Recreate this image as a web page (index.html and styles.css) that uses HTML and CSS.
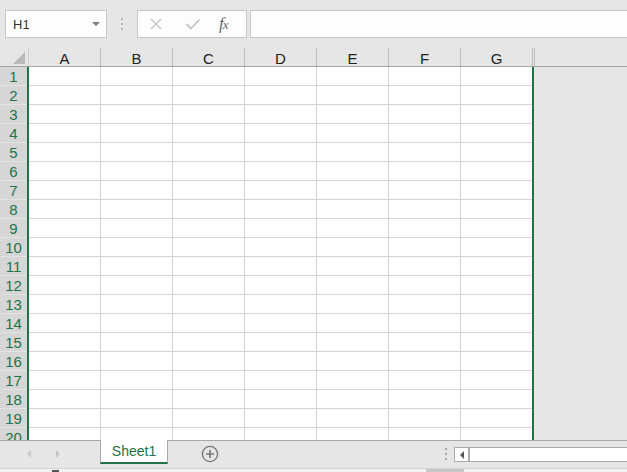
FILE: index.html
```html
<!DOCTYPE html>
<html lang="en">
<head>
<meta charset="UTF-8" />
<title>Book1 - Sheet1</title>
<link rel="stylesheet" href="styles.css">
</head>
<body>

<div class="app">
    <!-- formula bar -->
    <div class="formula-bar">
        <div class="name-box">
            <span>H1</span>
            <span class="drop"></span>
        </div>
        <div class="grip"><i></i><i></i><i></i></div>
        <div class="fx-box">
            <svg class="btn-icon" width="14" height="14" viewBox="0 0 14 14">
                <path d="M2 2 L12 12 M12 2 L2 12" stroke="#c4c4c4" stroke-width="1.4" fill="none"/>
            </svg>
            <svg class="btn-icon" width="16" height="14" viewBox="0 0 16 14">
                <path d="M1.5 7 L6 11.5 L14.5 2.5" stroke="#c4c4c4" stroke-width="1.8" fill="none"/>
            </svg>
            <span class="fx">f<small>x</small></span>
        </div>
        <div class="formula-input"></div>
    </div>

    <!-- sheet -->
    <div class="sheet">
        <div class="col-headers">
            <div class="corner"><span class="corner-tri"></span></div>
            <div class="col">A</div>
            <div class="col">B</div>
            <div class="col">C</div>
            <div class="col">D</div>
            <div class="col">E</div>
            <div class="col">F</div>
            <div class="col last">G</div>
        </div>
        <div class="sheet-body">
            <div class="row-headers">
                <div class="row">1</div>
                <div class="row">2</div>
                <div class="row">3</div>
                <div class="row">4</div>
                <div class="row">5</div>
                <div class="row">6</div>
                <div class="row">7</div>
                <div class="row">8</div>
                <div class="row">9</div>
                <div class="row">10</div>
                <div class="row">11</div>
                <div class="row">12</div>
                <div class="row">13</div>
                <div class="row">14</div>
                <div class="row">15</div>
                <div class="row">16</div>
                <div class="row">17</div>
                <div class="row">18</div>
                <div class="row">19</div>
                <div class="row">20</div>
            </div>
            <div class="cells"></div>
        </div>
    </div>

    <!-- sheet tabs -->
    <div class="tab-bar">
        <div class="tab-nav">
            <span class="arrow left"></span>
            <span class="arrow right"></span>
        </div>
        <div class="tab">Sheet1</div>
        <div class="add-sheet">
            <svg width="18" height="18" viewBox="0 0 18 18">
                <circle cx="9" cy="9" r="7.6" stroke="#777" stroke-width="1.4" fill="none"/>
                <path d="M9 5 V13 M5 9 H13" stroke="#777" stroke-width="1.6"/>
            </svg>
        </div>
        <div class="spacer"></div>
        <div class="grip tab-grip"><i></i><i></i><i></i></div>
        <div class="hscroll">
            <div class="hscroll-btn"><span class="arrow-dark"></span></div>
        </div>
    </div>
    <div class="status-strip">
        <span class="status-mark"></span>
        <span class="status-thumb"></span>
    </div>
</div>

</body>
</html>
```

FILE: styles.css
```css
body {
    margin: 0;
    background: #e6e6e6;
    font-family: 'Liberation Sans', 'Noto Sans CJK SC', sans-serif;
    color: #222;
}

.app {
    width: 627px;
    height: 472px;
    overflow: hidden;
    display: flex;
    flex-direction: column;
}

/* Formula bar */
.formula-bar {
    height: 48px;
    box-sizing: border-box;
    padding: 10px 0 0 5px;
    display: flex;
    align-items: flex-start;
    flex-shrink: 0;
}

.name-box,
.fx-box,
.formula-input {
    height: 28px;
    box-sizing: border-box;
    background: #fdfdfd;
    border: 1px solid #c6c6c6;
}

.name-box {
    width: 102px;
    display: flex;
    align-items: center;
    justify-content: space-between;
    padding: 0 6px 0 7px;
    font-size: 13px;
    color: #333;
}

.drop {
    width: 0;
    height: 0;
    border-left: 4px solid transparent;
    border-right: 4px solid transparent;
    border-top: 4px solid #7c7c7c;
}

.grip {
    width: 30px;
    height: 28px;
    display: flex;
    flex-direction: column;
    align-items: center;
    justify-content: center;
    gap: 3px;
}

.grip i {
    width: 2px;
    height: 2px;
    background: #b4b4b4;
}

.fx-box {
    width: 110px;
    display: flex;
    align-items: center;
    padding-left: 11px;
    gap: 22px;
}

.fx {
    font-family: 'Liberation Serif', serif;
    font-style: italic;
    font-size: 17px;
    color: #6a6a6a;
    margin-left: -4px;
    letter-spacing: -1px;
}

.fx small {
    font-size: 13px;
}

.formula-input {
    flex: 1;
    margin-left: 3px;
    border-right: none;
}

/* Sheet */
.sheet {
    height: 392px;
    overflow: hidden;
    display: flex;
    flex-direction: column;
    flex-shrink: 0;
}

.col-headers {
    height: 19px;
    box-sizing: border-box;
    border-bottom: 1px solid #a3a3a3;
    display: flex;
    flex-shrink: 0;
}

.corner {
    width: 29px;
    box-sizing: border-box;
    border-right: 1px solid #cfcfcf;
    position: relative;
}

.corner-tri {
    position: absolute;
    right: 3px;
    bottom: 2px;
    width: 0;
    height: 0;
    border-left: 12px solid transparent;
    border-bottom: 12px solid #b9b9b9;
}

.col {
    width: 72px;
    box-sizing: border-box;
    border-right: 1px solid #bdbdbd;
    text-align: center;
    font-size: 15px;
    line-height: 19px;
    padding-top: 1px;
    color: #222;
}

.col.last {
    border-right: 3px double #bdbdbd;
    width: 74px;
}

.sheet-body {
    flex: 1;
    display: flex;
    overflow: hidden;
}

.row-headers {
    width: 29px;
    box-sizing: border-box;
    background: #d6d6d6;
    border-right: 2px solid #217346;
}

.row {
    height: 19px;
    box-sizing: border-box;
    border-bottom: 1px solid #e3e3e3;
    text-align: center;
    font-size: 15px;
    line-height: 18px;
    padding-top: 1px;
    color: #217346;
}

.cells {
    width: 503px;
    background-color: #fff;
    background-image:
        repeating-linear-gradient(to right, transparent 0 71px, #d4d4d4 71px 72px),
        repeating-linear-gradient(to bottom, transparent 0 18px, #d4d4d4 18px 19px);
    border-right: 2px solid #217346;
}

/* Sheet tabs */
.tab-bar {
    height: 28px;
    box-sizing: border-box;
    border-top: 1px solid #a8a8a8;
    display: flex;
    align-items: flex-start;
    flex-shrink: 0;
}

.tab-nav {
    width: 100px;
    height: 26px;
    display: flex;
    align-items: center;
    padding-left: 27px;
    box-sizing: border-box;
    gap: 25px;
}

.arrow {
    width: 0;
    height: 0;
    border-top: 4px solid transparent;
    border-bottom: 4px solid transparent;
}

.arrow.left {
    border-right: 4px solid #c6c6c6;
}

.arrow.right {
    border-left: 4px solid #c6c6c6;
}

.tab {
    width: 68px;
    height: 24px;
    margin-top: -1px;
    box-sizing: border-box;
    background: #fff;
    border-left: 1px solid #a8a8a8;
    border-right: 1px solid #a8a8a8;
    border-bottom: 2px solid #217346;
    text-align: center;
    font-size: 14px;
    line-height: 22px;
    color: #217346;
}

.add-sheet {
    margin-left: 33px;
    margin-top: 4px;
    width: 18px;
    height: 18px;
}

.spacer {
    flex: 1;
}

.tab-grip {
    width: 16px;
    height: 26px;
    margin-right: 0;
}

.tab-grip i {
    background: #a8a8a8;
}

.hscroll {
    width: 173px;
    height: 15px;
    margin-top: 6px;
    box-sizing: border-box;
    background: #fff;
    border: 1px solid #ababab;
    border-right: none;
}

.hscroll-btn {
    width: 15px;
    height: 13px;
    box-sizing: border-box;
    border-right: 2px solid #ababab;
    display: flex;
    align-items: center;
    justify-content: center;
}

.arrow-dark {
    width: 0;
    height: 0;
    border-top: 4px solid transparent;
    border-bottom: 4px solid transparent;
    border-right: 4px solid #555;
}

.status-strip {
    flex: 1;
    background: #f1f1f1;
    border-top: 1px solid #d6d6d6;
    position: relative;
}

.status-mark {
    position: absolute;
    left: 52px;
    top: 1px;
    width: 7px;
    height: 2px;
    background: #555;
}

.status-thumb {
    position: absolute;
    left: 426px;
    top: 0;
    width: 38px;
    height: 4px;
    background: #c8c8c8;
}
```
